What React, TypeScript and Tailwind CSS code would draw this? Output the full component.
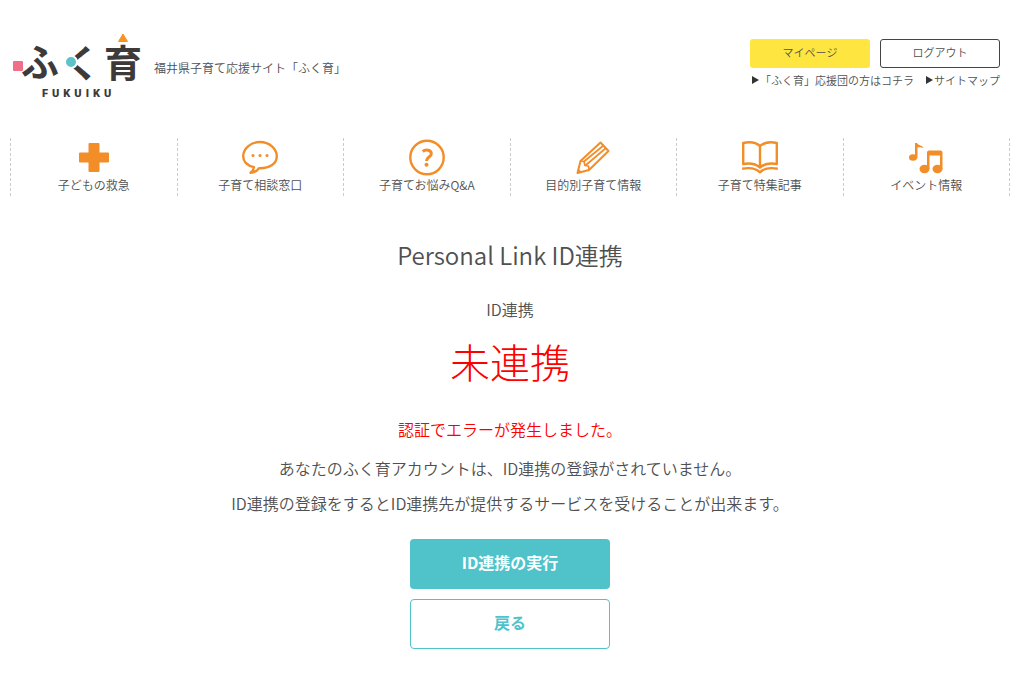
import type { ReactNode } from 'react';

function Logo() {
  return (
    <svg
      width="132"
      height="68"
      viewBox="0 0 132 68"
      className="overflow-visible"
      role="img"
      aria-label="ふく育 FUKUIKU"
    >
      <g fill="#3e3a39" className="font-bold">
        <text x="11" y="44" fontSize="38">ふ</text>
        <text x="52" y="45" fontSize="38">く</text>
        <text x="94" y="45" fontSize="38">育</text>
        <text x="32" y="65" fontSize="11" className="font-['Roboto',sans-serif] font-black tracking-[4px]">FUKUIKU</text>
      </g>
      <rect x="3" y="29" width="10" height="10" rx="1" fill="#ef6f88" />
      <circle cx="61" cy="30" r="6" fill="#5cc3ca" stroke="#fff" strokeWidth="2" />
      <path d="M106 10.500h14V0h-14z" fill="#fff" />
      <path d="M108.500 9.500 113 2 117.500 9.500z" fill="#f7931e" stroke="#f7931e" strokeLinejoin="round" />
    </svg>
  );
}

function Icon({ children }: { children: ReactNode }) {
  return (
    <svg
      width="38"
      height="38"
      viewBox="0 0 38 38"
      fill="none"
      stroke="#f28d28"
      strokeWidth="2.4"
      strokeLinejoin="round"
      aria-hidden="true"
    >
      {children}
    </svg>
  );
}

const menu = [
  {
    label: '子どもの救急',
    icon: (
      <path
        d="M14.500 5h9a1 1 0 0 1 1 1v8.500H33a1 1 0 0 1 1 1v8a1 1 0 0 1-1 1h-8.500V33a1 1 0 0 1-1 1h-9a1 1 0 0 1-1-1v-8.500H5a1 1 0 0 1-1-1v-8a1 1 0 0 1 1-1h8.500V6a1 1 0 0 1 1-1z"
        fill="#f28d28"
        stroke="none"
      />
    ),
  },
  {
    label: '子育て相談窓口',
    icon: (
      <>
        <path d="M13 29.200C6.500 27.500 2.200 23.400 2.200 18.200 2.200 10.800 9.500 4 19 4s16.800 6.800 16.800 14.200S29 30.500 18 30.200c-2 2.800-4.800 4.300-8.500 4.600 2-1.600 3.200-3.400 3.500-5.600z" />
        <g fill="#f28d28" stroke="none">
          <circle cx="12" cy="17.500" r="1.500" />
          <circle cx="19" cy="17.500" r="1.500" />
          <circle cx="26" cy="17.500" r="1.500" />
        </g>
      </>
    ),
  },
  {
    label: '子育てお悩みQ&A',
    icon: (
      <>
        <circle cx="19" cy="19.500" r="16.700" />
        <path d="M14.700 13.500c2.800-2.300 8.600-1.900 8.600 2.200 0 3.300-4.800 3.400-4.800 7.300" strokeWidth="3" />
        <circle cx="18.500" cy="26.800" r="2" fill="#f28d28" stroke="none" />
      </>
    ),
  },
  {
    label: '目的別子育て情報',
    icon: (
      <>
        <path d="m3.500 35 3-12L26.500 4.500l8 8.500L15 32z" strokeWidth="2" />
        <path d="m6.500 23 3.500.500 1 4 3.500.500.500 4M10 23.500 29.500 7.500M12 27 32 10" strokeWidth="1.700" />
        <path d="m3 35.500 1.300-5 3.500 3.500z" fill="#f28d28" stroke="none" />
      </>
    ),
  },
  {
    label: '子育て特集記事',
    icon: (
      <>
        <path d="M19 8C14.500 4 8.500 3.500 2.200 5v21c6.300-1.200 12.300-.500 16.800 3.500 4.500-4 10.500-4.700 16.800-3.500V5C29.500 3.500 23.500 4 19 8zv21" />
        <path d="M1.200 30.800c7-1.400 13.300-1 17.800 3.500 4.500-4.500 10.800-4.900 17.800-3.500" />
      </>
    ),
  },
  {
    label: 'イベント情報',
    icon: (
      <g fill="#f28d28" stroke="none">
        <ellipse cx="6" cy="19.500" rx="4" ry="3.200" />
        <path d="M8 5h2c1.200 2.700 5 2 6.700 5-2.500-.800-4.300-.800-6.200-.800V20H8z" />
        <ellipse cx="17.500" cy="31" rx="5" ry="4.200" />
        <ellipse cx="30.500" cy="31" rx="5" ry="4.200" />
        <path d="M20 14.500a2 2 0 0 1 2-2h11.500a2 2 0 0 1 2 2V31h-2.500V17.500H22.500V31H20z" />
      </g>
    ),
  },
];

function SmallLink({ children }: { children: ReactNode }) {
  return (
    <a href="#" className="flex items-center">
      <svg width="8" height="8" viewBox="0 0 8 8" fill="#333" aria-hidden="true">
        <path d="M0 0 7 4 0 8z" />
      </svg>
      {children}
    </a>
  );
}

export default function App() {
  return (
    <div className="bg-white pt-8 pr-[2px] pb-8 pl-[10px] font-['Noto_Sans_CJK_JP',sans-serif] font-[350] text-[#505050]">
      <header className="flex justify-between pr-[10px]">
        <div className="flex items-center gap-3">
          <a href="#">
            <Logo />
          </a>
          <p className="pt-1 text-xs">福井県子育て応援サイト「ふく育」</p>
        </div>
        <div className="flex flex-col items-end gap-1 pt-[7px]">
          <div className="flex gap-[10px]">
            <button className="h-[29px] w-[120px] rounded-[3px] bg-[#ffe53f] pb-[2px] text-[11px]">マイページ</button>
            <button className="h-[29px] w-[120px] rounded-[3px] border border-[#444] pb-[2px] text-[11px]">ログアウト</button>
          </div>
          <div className="flex gap-3 text-[11px] leading-4">
            <SmallLink>「ふく育」応援団の方はコチラ</SmallLink>
            <SmallLink>サイトマップ</SmallLink>
          </div>
        </div>
      </header>

      <nav className="mt-[38px]">
        <ul className="grid grid-cols-6 border-r border-dashed border-[#ccc]">
          {menu.map((item) => (
            <li key={item.label} className="h-[58px] border-l border-dashed border-[#ccc]">
              <a href="#" className="flex flex-col items-center text-xs leading-[18px]">
                <Icon>{item.icon}</Icon>
                {item.label}
              </a>
            </li>
          ))}
        </ul>
      </nav>

      <main className="flex flex-col items-center pt-[39px] text-center">
        <h1 className="text-2xl leading-10">Personal Link ID連携</h1>
        <h2 className="mt-[22px] text-base">ID連携</h2>
        <p className="mt-3 text-[40px] leading-[56px] font-light text-[#f00]">未連携</p>
        <p className="mt-7 text-base text-[#f00]">認証でエラーが発生しました。</p>
        <p className="mt-[10px] text-base leading-[35px]">
          あなたのふく育アカウントは、ID連携の登録がされていません。
          <br />
          ID連携の登録をするとID連携先が提供するサービスを受けることが出来ます。
        </p>
        <button className="mt-[18px] h-[50px] w-[200px] rounded bg-[#50c3ca] pb-1 text-base font-bold text-white">
          ID連携の実行
        </button>
        <button className="mt-[10px] h-[50px] w-[200px] rounded border border-[#50c3ca] pb-1 text-base font-bold text-[#50c3ca]">
          戻る
        </button>
      </main>
    </div>
  );
}
